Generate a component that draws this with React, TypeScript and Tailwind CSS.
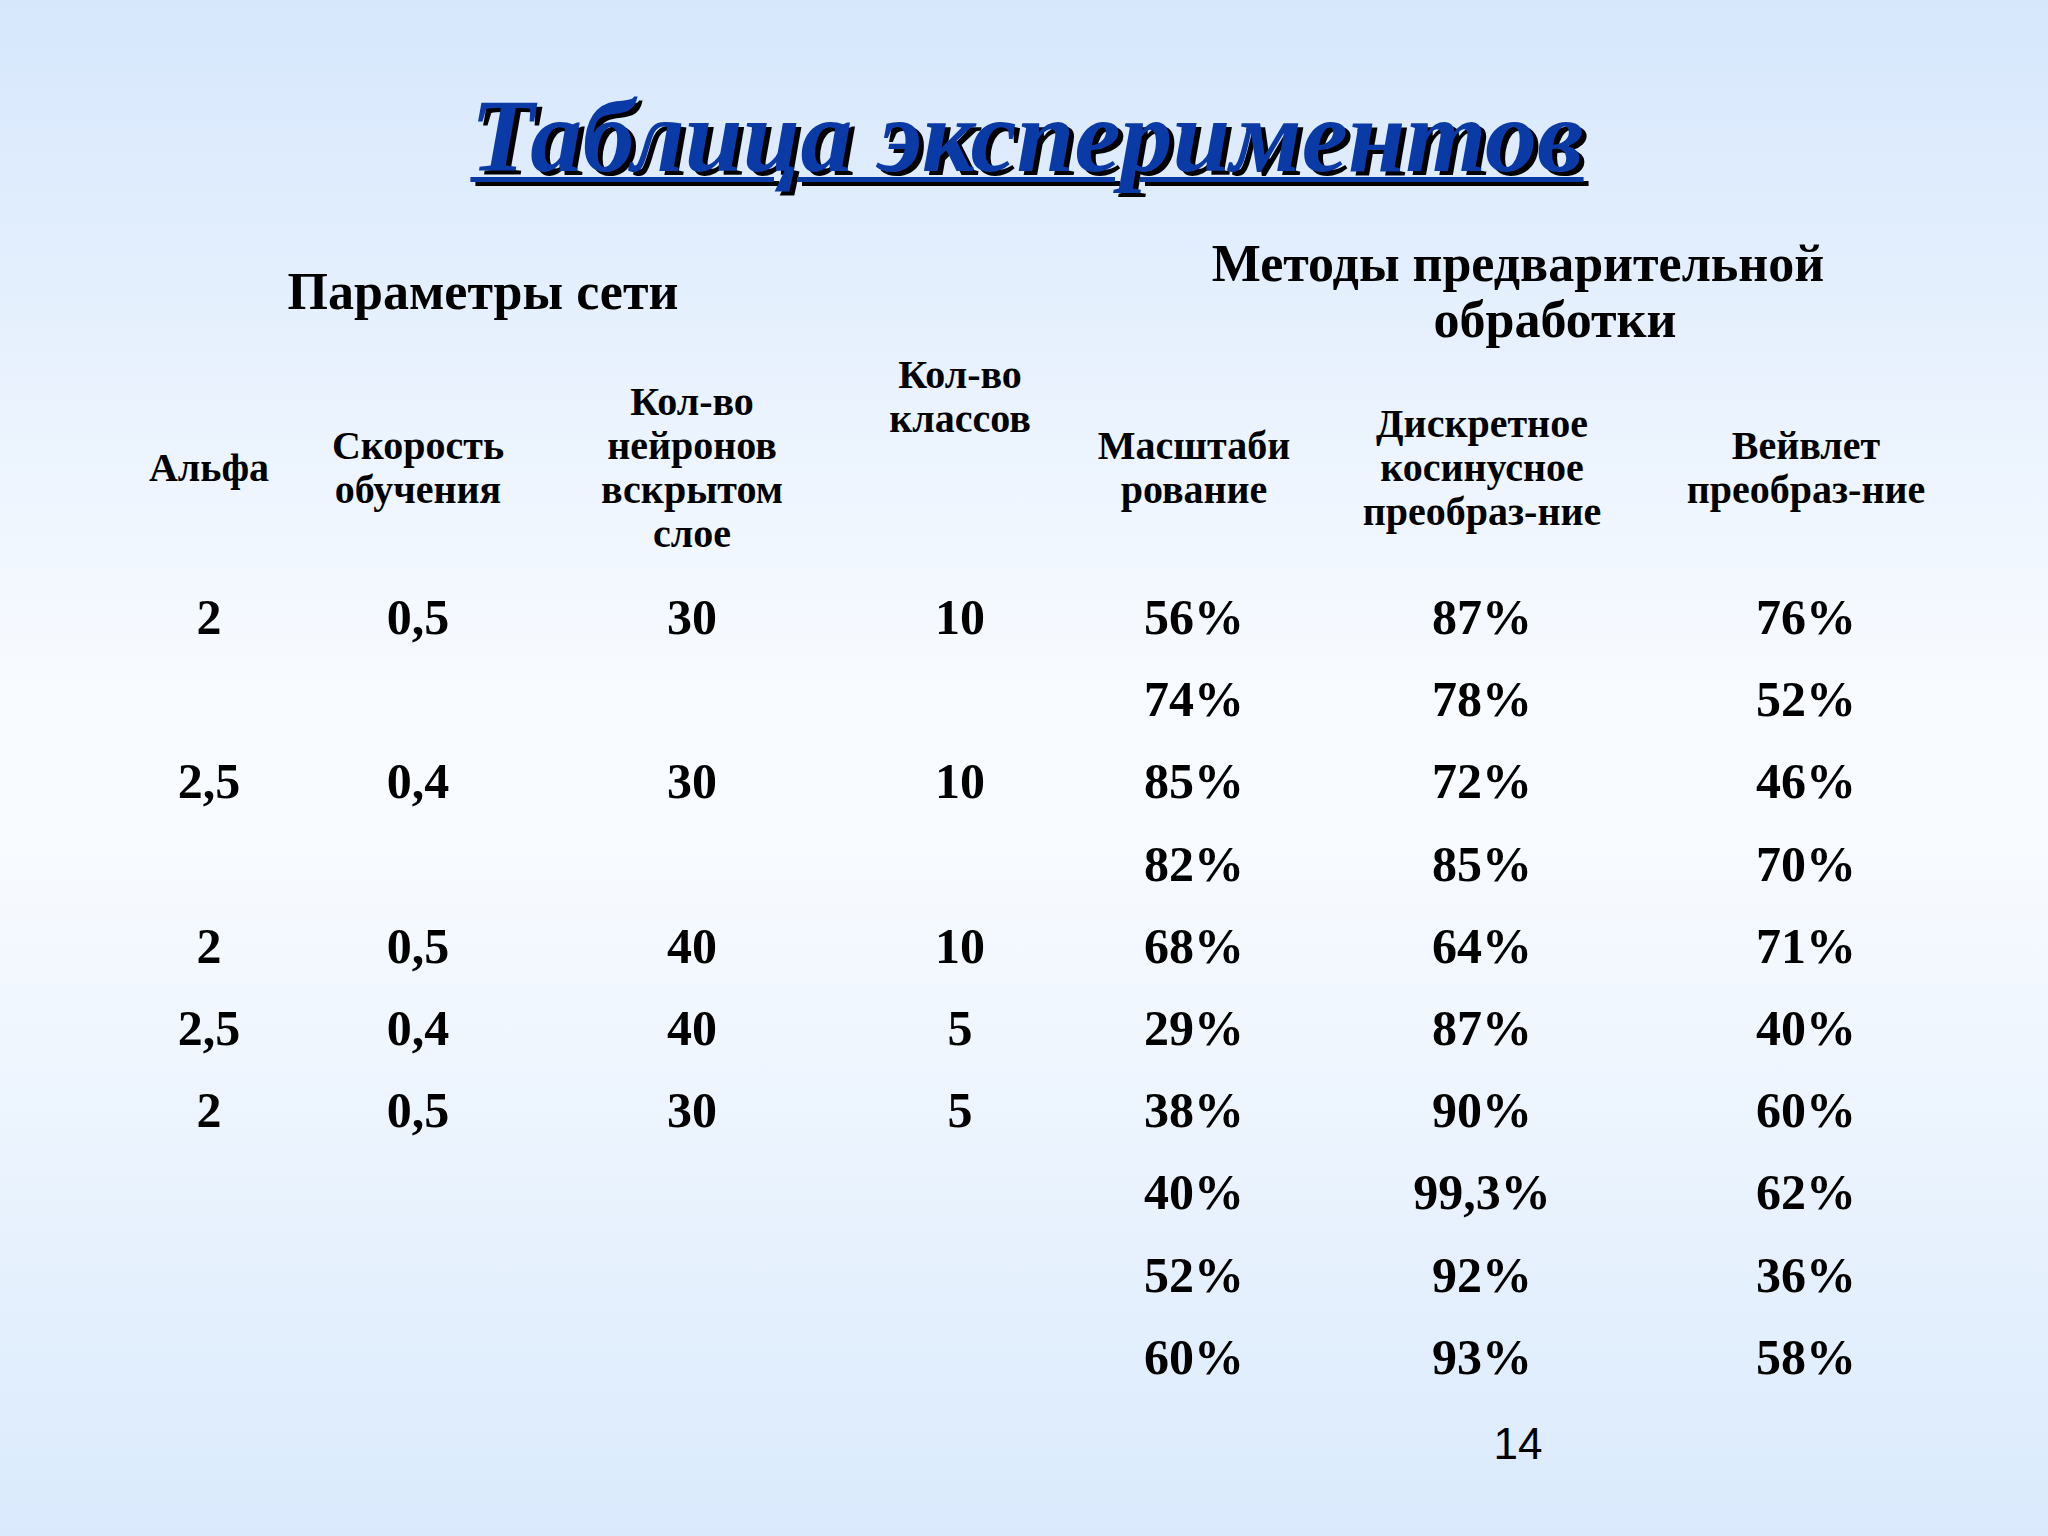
import React from "react";

const rows: [string, string, string, string, string, string, string][] = [
  ["2", "0,5", "30", "10", "56%", "87%", "76%"],
  ["", "", "", "", "74%", "78%", "52%"],
  ["2,5", "0,4", "30", "10", "85%", "72%", "46%"],
  ["", "", "", "", "82%", "85%", "70%"],
  ["2", "0,5", "40", "10", "68%", "64%", "71%"],
  ["2,5", "0,4", "40", "5", "29%", "87%", "40%"],
  ["2", "0,5", "30", "5", "38%", "90%", "60%"],
  ["", "", "", "", "40%", "99,3%", "62%"],
  ["", "", "", "", "52%", "92%", "36%"],
  ["", "", "", "", "60%", "93%", "58%"],
];

const GRID = "grid grid-cols-[208px_210px_338px_198px_270px_306px_342px] pl-[105px]";

export default function App() {
  return (
    <div className="w-[2048px] h-[1536px] overflow-hidden bg-[linear-gradient(180deg,#d6e7fc_0%,#f8fbff_45%,#f8fbff_55%,#daeafc_100%)] font-['Liberation_Serif','Times_New_Roman',serif] text-black">
      {/* Title */}
      <div className="pt-[84px] flex justify-center">
        <h1 className="text-[104px] leading-none font-bold italic text-[#0a3aa6] underline decoration-[5px] underline-offset-[6px] [text-shadow:5px_4px_0_#000] pl-[6px]">
          Таблица экспериментов
        </h1>
      </div>

      {/* Group headers */}
      <div className={`${GRID} mt-[48px] items-center font-bold text-[52px] leading-[56px]`}>
        <div className="col-span-3 text-center">Параметры сети</div>
        <div className="col-start-5 col-span-3 text-center">
          <div>Методы предварительной</div>
          <div className="pl-[74px]">обработки</div>
        </div>
      </div>

      {/* Column headers */}
      <div className={`${GRID} mt-[32px] items-center font-bold text-[40px] leading-[44px] text-center`}>
        <div>Альфа</div>
        <div>
          Скорость
          <br />
          обучения
        </div>
        <div>
          Кол-во
          <br />
          нейронов
          <br />
          вскрытом
          <br />
          слое
        </div>
        <div className="self-start -mt-[27px]">
          Кол-во
          <br />
          классов
        </div>
        <div>
          Масштаби
          <br />
          рование
        </div>
        <div>
          Дискретное
          <br />
          косинусное
          <br />
          преобраз-ние
        </div>
        <div>
          Вейвлет
          <br />
          преобраз-ние
        </div>
      </div>

      {/* Data rows */}
      <div className="mt-[20px] font-bold text-[50px] leading-[82.2px] text-center">
        {rows.map((r, i) => (
          <div key={i} className={`${GRID} h-[82.2px]`}>
            {r.map((c, j) => (
              <div key={j}>{c}</div>
            ))}
          </div>
        ))}
      </div>

      {/* Page number */}
      <div className={`${GRID} mt-[24px]`}>
        <div className="col-start-5 col-span-3 text-center font-['Liberation_Sans',Arial,sans-serif] text-[44px] leading-none">
          14
        </div>
      </div>
    </div>
  );
}
